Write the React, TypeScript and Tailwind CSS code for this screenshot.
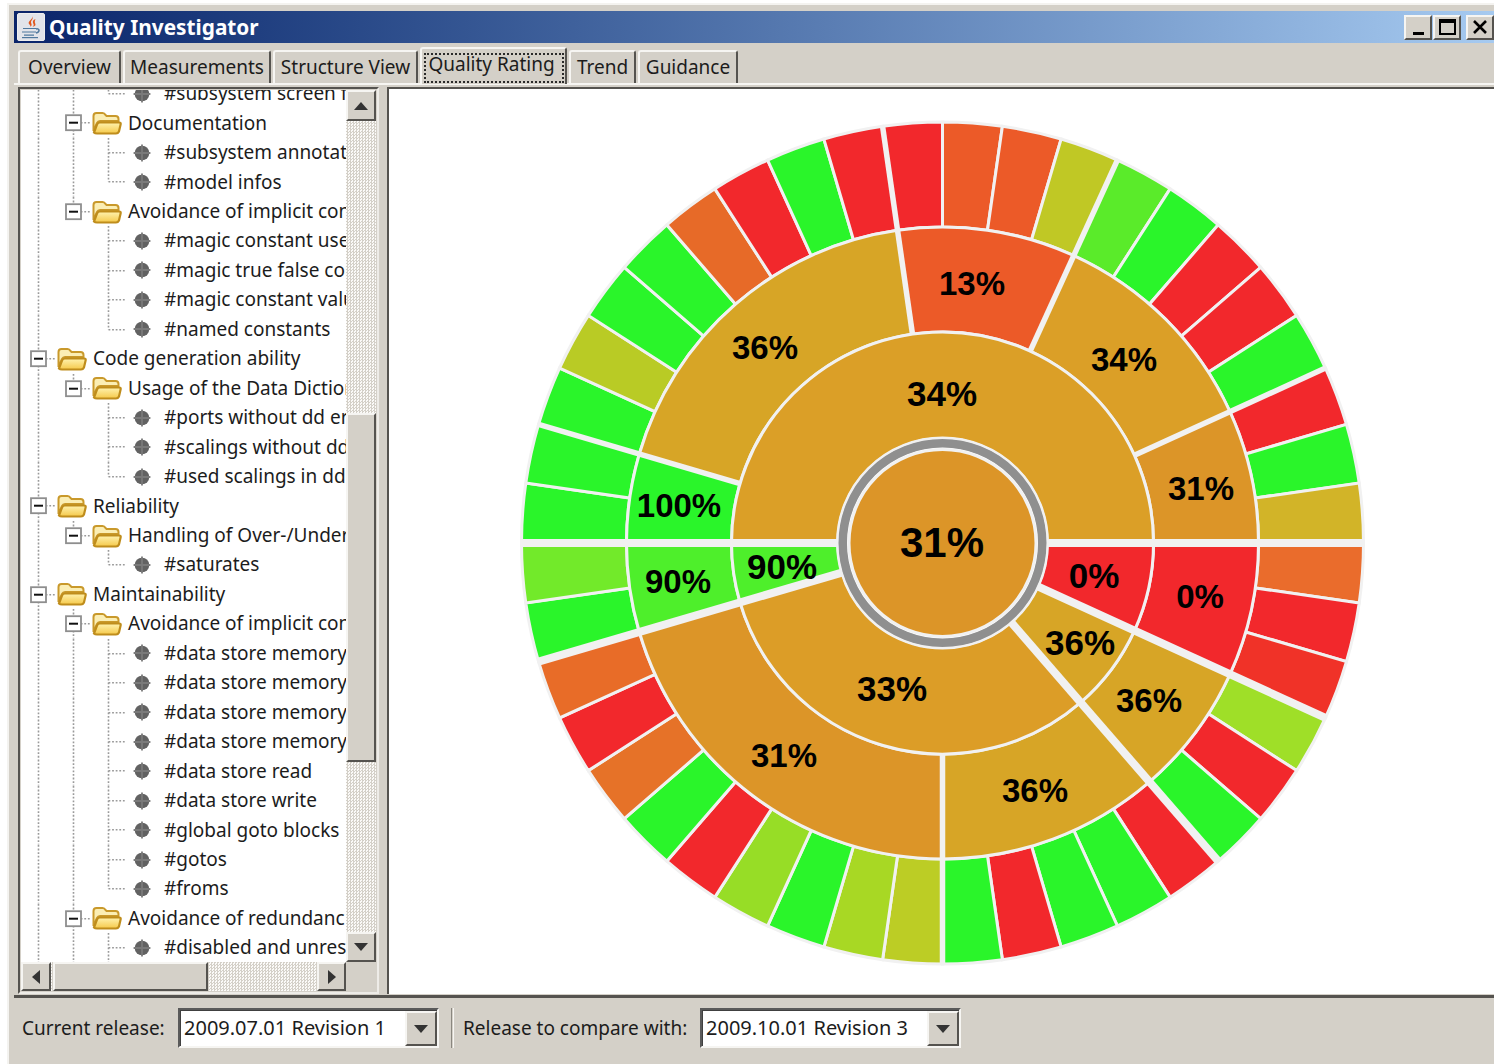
import React from 'react'

// --- sunburst geometry ---
const CX = 942.5
const CY = 543
const LEAF = 360 / 44
const GAP = '#f1f1f1'

const GREEN = '#2af52a'
const RED = '#f2282c'
const ORANGE = '#e76a28'
const FLAME = '#ec5a28'
const AMBER = '#d7a526'
const OCHRE = '#db9f27'
const COPPER = '#dc9528'
const LIME = '#4eef2b'

const pt = (r: number, a: number) => {
   const t = (a * Math.PI) / 180
   return [CX + r * Math.cos(t), CY + r * Math.sin(t)]
}

const arc = (r0: number, r1: number, a0: number, a1: number) => {
   const [x0, y0] = pt(r1, a0)
   const [x1, y1] = pt(r1, a1)
   const [x2, y2] = pt(r0, a1)
   const [x3, y3] = pt(r0, a0)
   const large = a1 - a0 > 180 ? 1 : 0
   return `M${x0} ${y0}A${r1} ${r1} 0 ${large} 1 ${x1} ${y1}L${x2} ${y2}A${r0} ${r0} 0 ${large} 0 ${x3} ${y3}Z`
}

// clockwise from 3 o'clock, one colour per leaf
const leaves = [
   '#ea6c2c', RED, '#f03228',
   '#9fdf28', RED, GREEN,
   RED, GREEN, GREEN, RED, GREEN,
   '#bccd25', '#a8d824', GREEN, '#97dd26', RED, GREEN, '#e67228', RED, '#e86c28',
   GREEN, '#72ea2a',
   GREEN, GREEN,
   GREEN, '#b9cb25', GREEN, GREEN, ORANGE, RED, GREEN, RED,
   RED, FLAME, FLAME, '#c0c825',
   '#5aeb2a', GREEN, RED, RED, GREEN,
   RED, GREEN, '#d2b428',
]

// [first leaf, leaf count, colour]
const middle: [number, number, string][] = [
   [0, 3, RED],
   [3, 3, AMBER],
   [6, 5, AMBER],
   [11, 9, COPPER],
   [20, 2, LIME],
   [22, 2, GREEN],
   [24, 8, AMBER],
   [32, 4, FLAME],
   [36, 5, OCHRE],
   [41, 3, COPPER],
]

const inner: [number, number, string][] = [
   [0, 3, RED],
   [3, 3, AMBER],
   [6, 14, '#dc9d27'],
   [20, 2, LIME],
   [22, 22, OCHRE],
]

const labels: [string, number, number, number][] = [
   ['31%', 942, 557, 42],
   ['34%', 942, 406, 35],
   ['34%', 1124, 371, 33],
   ['13%', 972, 295, 33],
   ['36%', 765, 359, 33],
   ['31%', 1201, 500, 33],
   ['100%', 679, 517, 33],
   ['90%', 782, 579, 35],
   ['90%', 678, 593, 33],
   ['0%', 1094, 588, 35],
   ['0%', 1200, 608, 33],
   ['36%', 1080, 655, 35],
   ['36%', 1149, 712, 33],
   ['33%', 892, 701, 35],
   ['31%', 784, 767, 33],
   ['36%', 1035, 802, 33],
]

const Spoke = ({ a, from, width }: { a: number; from: number; width: number }) => {
   const [x0, y0] = pt(from, a)
   const [x1, y1] = pt(421, a)
   return <line x1={x0} y1={y0} x2={x1} y2={y1} stroke={GAP} strokeWidth={width} />
}

const Sunburst = () => (
   <svg viewBox="389 89 1105 905" className="block h-full w-full">
      {leaves.map((c, i) => (
         <path key={i} d={arc(316, 421, i * LEAF, (i + 1) * LEAF)} fill={c} stroke={GAP} strokeWidth={3} />
      ))}
      {middle.map(([s, n, c]) => (
         <path key={s} d={arc(211, 316, s * LEAF, (s + n) * LEAF)} fill={c} stroke={GAP} strokeWidth={3} />
      ))}
      {inner.map(([s, n, c]) => (
         <path key={s} d={arc(105, 211, s * LEAF, (s + n) * LEAF)} fill={c} stroke={GAP} strokeWidth={3} />
      ))}

      {/* heavier spokes where a group ends */}
      {[11, 24, 32, 36, 41].map((s) => (
         <Spoke key={s} a={s * LEAF} from={211} width={5.5} />
      ))}
      {[0, 3, 6, 20, 22].map((s) => (
         <Spoke key={s} a={s * LEAF} from={104} width={8} />
      ))}

      <circle cx={CX} cy={CY} r={100} fill="none" stroke="#8f8f8f" strokeWidth={9} />
      <circle cx={CX} cy={CY} r={105} fill="none" stroke={GAP} strokeWidth={2} />
      <circle cx={CX} cy={CY} r={93.5} fill={COPPER} stroke={GAP} strokeWidth={3} />

      {labels.map(([t, x, y, size], i) => (
         <text
            key={i}
            x={x}
            y={y}
            textAnchor="middle"
            fontSize={size}
            fontWeight={700}
            fontFamily="'Liberation Sans', Arial, sans-serif"
            fill="#000"
         >
            {t}
         </text>
      ))}
   </svg>
)

// --- tree ---
type Link = 'none' | 'line' | 'tee' | 'elbow'

const ROW = 29.46
const DOT = '#9a9a9a'

// one indent column: dotted guide, optional branch and +/- box
const Connector = ({ link, box }: { link: Link; box?: boolean }) => (
   <svg width={35} height={ROW} className="shrink-0">
      {link !== 'none' && (
         <line
            x1={17.5}
            y1={0}
            x2={17.5}
            y2={link === 'elbow' ? ROW / 2 : ROW}
            stroke={DOT}
            strokeWidth={1.6}
            strokeDasharray="1.8 1.8"
         />
      )}
      {(link === 'tee' || link === 'elbow' || box) && (
         <line x1={17.5} y1={ROW / 2} x2={35} y2={ROW / 2} stroke={DOT} strokeWidth={1.6} strokeDasharray="1.8 1.8" />
      )}
      {box && (
         <g>
            <rect x={10} y={7.2} width={15} height={15} fill="#fff" stroke="#8e8e8e" strokeWidth={1.8} />
            <line x1={13} y1={14.7} x2={22} y2={14.7} stroke="#111" strokeWidth={2} />
         </g>
      )}
   </svg>
)

const Folder = () => (
   <svg width={30} height={24} viewBox="0 0 30 24" className="ml-[1px] shrink-0">
      <defs>
         <linearGradient id="folderFill" x1="0" y1="0" x2="0" y2="1">
            <stop offset="0" stopColor="#fff3b0" />
            <stop offset="1" stopColor="#f5c94a" />
         </linearGradient>
      </defs>
      <path d="M1.5 20V5q0-3 3-3h6q2 0 3 2l1 1h9q3 0 3 3v2H8q-2 0-3 2z" fill="#fbeeb4" stroke="#c9992b" strokeWidth={2} />
      <path d="M2 21.5q1 1 3 1h19q2 0 3-2l1.600-7q.5-2-1.500-2H8q-2 0-3 2z" fill="url(#folderFill)" stroke="#bf8d1c" strokeWidth={2.2} />
   </svg>
)

const Bullet = () => (
   <svg width={18} height={18} viewBox="0 0 18 18" className="shrink-0">
      <circle cx={9} cy={9} r={7.3} fill="#626262" />
      <path d="M9 .6v16.8M.6 9h16.8" stroke="#7a7a7a" strokeWidth={1.8} />
   </svg>
)

const Group = ({ label, guides, last }: { label: string; guides: Link[]; last?: boolean }) => (
   <div className="flex items-center whitespace-nowrap" style={{ height: ROW }}>
      {guides.map((g, i) => (
         <Connector key={i} link={g} />
      ))}
      <Connector link={last ? 'elbow' : 'line'} box />
      <Folder />
      <span className="ml-[6px]">{label}</span>
   </div>
)

const Leaf = ({ label, guides, last }: { label: string; guides: Link[]; last?: boolean }) => (
   <div className="flex items-center whitespace-nowrap" style={{ height: ROW }}>
      {guides.map((g, i) => (
         <Connector key={i} link={g} />
      ))}
      <Connector link={last ? 'elbow' : 'tee'} />
      <div className="ml-[7px] flex items-center">
         <Bullet />
      </div>
      <span className="ml-[13px]">{label}</span>
   </div>
)

const both: Link[] = ['line', 'line']
const outerOnly: Link[] = ['line', 'none']

const Tree = () => (
   <div className="-mt-[11px]">
      <Leaf guides={both} label="#subsystem screen f" last />
      <Group guides={['line']} label="Documentation" />
      <Leaf guides={both} label="#subsystem annotat" />
      <Leaf guides={both} label="#model infos" last />
      <Group guides={['line']} label="Avoidance of implicit con" last />
      <Leaf guides={outerOnly} label="#magic constant use" />
      <Leaf guides={outerOnly} label="#magic true false cor" />
      <Leaf guides={outerOnly} label="#magic constant valu" />
      <Leaf guides={outerOnly} label="#named constants" last />
      <Group guides={[]} label="Code generation ability" />
      <Group guides={['line']} label="Usage of the Data Dictior" last />
      <Leaf guides={outerOnly} label="#ports without dd er" />
      <Leaf guides={outerOnly} label="#scalings without dd" />
      <Leaf guides={outerOnly} label="#used scalings in dd" last />
      <Group guides={[]} label="Reliability" />
      <Group guides={['line']} label="Handling of Over-/Under" last />
      <Leaf guides={outerOnly} label="#saturates" last />
      <Group guides={[]} label="Maintainability" />
      <Group guides={['line']} label="Avoidance of implicit con" />
      <Leaf guides={both} label="#data store memory" />
      <Leaf guides={both} label="#data store memory" />
      <Leaf guides={both} label="#data store memory" />
      <Leaf guides={both} label="#data store memory" />
      <Leaf guides={both} label="#data store read" />
      <Leaf guides={both} label="#data store write" />
      <Leaf guides={both} label="#global goto blocks" />
      <Leaf guides={both} label="#gotos" />
      <Leaf guides={both} label="#froms" last />
      <Group guides={['line']} label="Avoidance of redundanc" />
      <Leaf guides={both} label="#disabled and unres" />
   </div>
)

// --- classic widgets ---
const raised =
   'border-2 border-t-[#f6f5f2] border-l-[#f6f5f2] border-r-[#55534f] border-b-[#55534f] bg-[#d4d0c8]'
const sunken =
   'border-2 border-t-[#5a5a5a] border-l-[#5a5a5a] border-r-[#f6f5f2] border-b-[#f6f5f2]'
const track =
   'bg-[repeating-conic-gradient(#d4d0c8_0_25%,#fbfaf8_0_50%)] bg-[length:3px_3px]'

const Arrow = ({ dir }: { dir: 'up' | 'down' | 'left' | 'right' }) => {
   const d = {
      up: 'M0 8 7 0l7 8z',
      down: 'M0 0h14L7 8z',
      left: 'M8 0v14L0 7z',
      right: 'M0 0v14l8-7z',
   }[dir]
   const vertical = dir === 'up' || dir === 'down'
   return (
      <svg width={vertical ? 14 : 8} height={vertical ? 8 : 14} className="shrink-0">
         <path d={d} fill="#333" />
      </svg>
   )
}

const tabs = [
   { label: 'Overview', w: 'w-[103px]' },
   { label: 'Measurements', w: 'w-[148px]' },
   { label: 'Structure View', w: 'w-[145px]' },
   { label: 'Quality Rating', w: 'w-[147px]', active: true },
   { label: 'Trend', w: 'w-[67px]' },
   { label: 'Guidance', w: 'w-[100px]' },
]

const Tabs = () => (
   <div className="flex h-[40px] items-end gap-[2px] pl-[4px]">
      {tabs.map((t) =>
         t.active ? (
            <div
               key={t.label}
               className={`${t.w} z-10 -mb-[1px] flex h-[37px] shrink-0 items-end justify-center rounded-t-[3px] border-t-2 border-r-2 border-l-2 border-t-[#f6f5f2] border-r-[#55534f] border-l-[#f6f5f2] bg-[#d4d0c8] pb-[1px]`}
            >
               <div className="flex h-[30px] w-[140px] items-start justify-center border-2 border-dotted border-[#2a2a2a] pr-[4px] leading-[19px]">
                  {t.label}
               </div>
            </div>
         ) : (
            <div
               key={t.label}
               className={`${t.w} flex h-[33px] shrink-0 items-center justify-center rounded-t-[3px] border-t-2 border-r-2 border-l-2 border-t-[#f6f5f2] border-r-[#55534f] border-l-[#f6f5f2] bg-[#d4d0c8]`}
            >
               {t.label}
            </div>
         )
      )}
   </div>
)

const Combo = ({ value, w }: { value: string; w: string }) => (
   <div className={`${w} ${sunken} flex h-[40px] shrink-0 items-stretch bg-white text-[20px] shadow-[inset_1px_1px_0_#404040]`}>
      <div className="flex grow items-center pl-[4px]">{value}</div>
      <div className={`${raised} mt-[1px] flex w-[32px] items-center justify-center`}>
         <Arrow dir="down" />
      </div>
   </div>
)

const TitleButton = ({ children, ml }: { children: React.ReactNode; ml: string }) => (
   <div className={`${raised} ${ml} flex h-[25px] w-[28px] shrink-0 items-center justify-center`}>
      {children}
   </div>
)

const JavaIcon = () => (
   <div className="mr-[4px] flex h-[28px] w-[28px] shrink-0 items-center justify-center rounded-[2px] border border-[#eeeeee] bg-[#e2e4ea]">
      <svg width={22} height={24} viewBox="0 0 22 24">
         <path d="M12 1c2 3-5 5-3 8 1 1 2 2 1 3 3-2 1-3 1-5 0-2 3-3 1-6z" fill="#e2571c" />
         <path d="M15.500 4c-3 1-3 3-2 5 .5 1 0 2-1 3 3-1 3.500-2 2.500-4-.5-1 0-3 .5-4z" fill="#e2571c" />
         <path d="M3 13h13v1H3zM2 16.500h14v1H2zM4 19.500h10v1.200H4z" fill="#4f789e" />
         <path d="M16 14c4-1 4 3 0 4" fill="none" stroke="#4f789e" strokeWidth={1.5} />
         <path d="M2 22h16v1.200H2z" fill="#4f789e" />
      </svg>
   </div>
)

const App = () => (
   <div
      className="flex h-[1064px] w-[1494px] flex-col overflow-hidden bg-white pt-[3px] pl-[7px] text-[19px] leading-none text-[#1c1c1c]"
      style={{ fontFamily: "'Noto Sans', 'DejaVu Sans', sans-serif" }}
   >
      <div className="flex grow flex-col border-t-2 border-l-2 border-[#f4f3f0] bg-[#d4d0c8] pt-[6px] pl-[5px]">
         {/* title bar */}
         <div className="flex h-[32px] shrink-0 items-center bg-gradient-to-r from-[#0a246a] to-[#a6caf0] pl-[3px]">
            <JavaIcon />
            <span className="text-[20.8px] font-bold text-white">Quality Investigator</span>
            <div className="ml-auto flex">
               <TitleButton ml="">
                  <div className="mt-[12px] h-[3px] w-[11px] bg-black" />
               </TitleButton>
               <TitleButton ml="ml-[1px]">
                  <div className="h-[16px] w-[17px] border-[2px] border-t-[4px] border-black" />
               </TitleButton>
               <TitleButton ml="ml-[5px]">
                  <svg width={16} height={14}>
                     <path d="M2 1l12 12M14 1 2 13" stroke="#000" strokeWidth={2.6} />
                  </svg>
               </TitleButton>
            </div>
         </div>

         <Tabs />

         {/* tree and chart */}
         <div className="flex h-[912px] shrink-0 gap-[8px] border-t-2 border-[#f6f5f2] pt-[2px] pl-[4px]">
            <div className="flex h-[907px] w-[361px] shrink-0 flex-col border-2 border-t-[#55534f] border-r-[#eeece8] border-b-[#eeece8] border-l-[#55534f] p-[1px]">
               <div className="flex min-h-0 grow">
                  <div className="min-w-0 grow overflow-hidden bg-white">
                     <Tree />
                  </div>
                  <div className={`${track} flex w-[30px] shrink-0 flex-col`}>
                     <div className={`${raised} flex h-[31px] shrink-0 items-center justify-center`}>
                        <Arrow dir="up" />
                     </div>
                     <div className="h-[292px] shrink-0" />
                     <div className={`${raised} h-[349px] shrink-0`} />
                     <div className="grow" />
                     <div className={`${raised} flex h-[30px] shrink-0 items-center justify-center`}>
                        <Arrow dir="down" />
                     </div>
                  </div>
               </div>
               <div className="flex h-[29px] shrink-0">
                  <div className={`${track} flex w-[325px] shrink-0`}>
                     <div className={`${raised} flex w-[30px] shrink-0 items-center justify-center`}>
                        <Arrow dir="left" />
                     </div>
                     <div className={`${raised} ml-[2px] w-[155px] shrink-0`} />
                     <div className="grow" />
                     <div className={`${raised} flex w-[29px] shrink-0 items-center justify-center`}>
                        <Arrow dir="right" />
                     </div>
                  </div>
                  <div className="grow bg-[#d4d0c8]" />
               </div>
            </div>
            <div className="h-[907px] min-w-0 grow border-t-2 border-l-2 border-[#55534f] bg-white">
               <Sunburst />
            </div>
         </div>

         {/* release pickers */}
         <div className="flex grow items-start border-t-[3px] border-[#55534f] pt-[10px] pl-[8px]">
            <div className="flex h-[40px] items-center">
               <span className="w-[156px] shrink-0">Current release:</span>
               <Combo value="2009.07.01 Revision 1" w="w-[261px]" />
               <div className="mr-[9px] ml-[12px] h-[40px] w-[3px] border-x border-r-[#f6f5f2] border-l-[#8a8780]" />
               <span className="w-[237px] shrink-0">Release to compare with:</span>
               <Combo value="2009.10.01 Revision 3" w="w-[261px]" />
            </div>
         </div>
      </div>
   </div>
)

export default App
